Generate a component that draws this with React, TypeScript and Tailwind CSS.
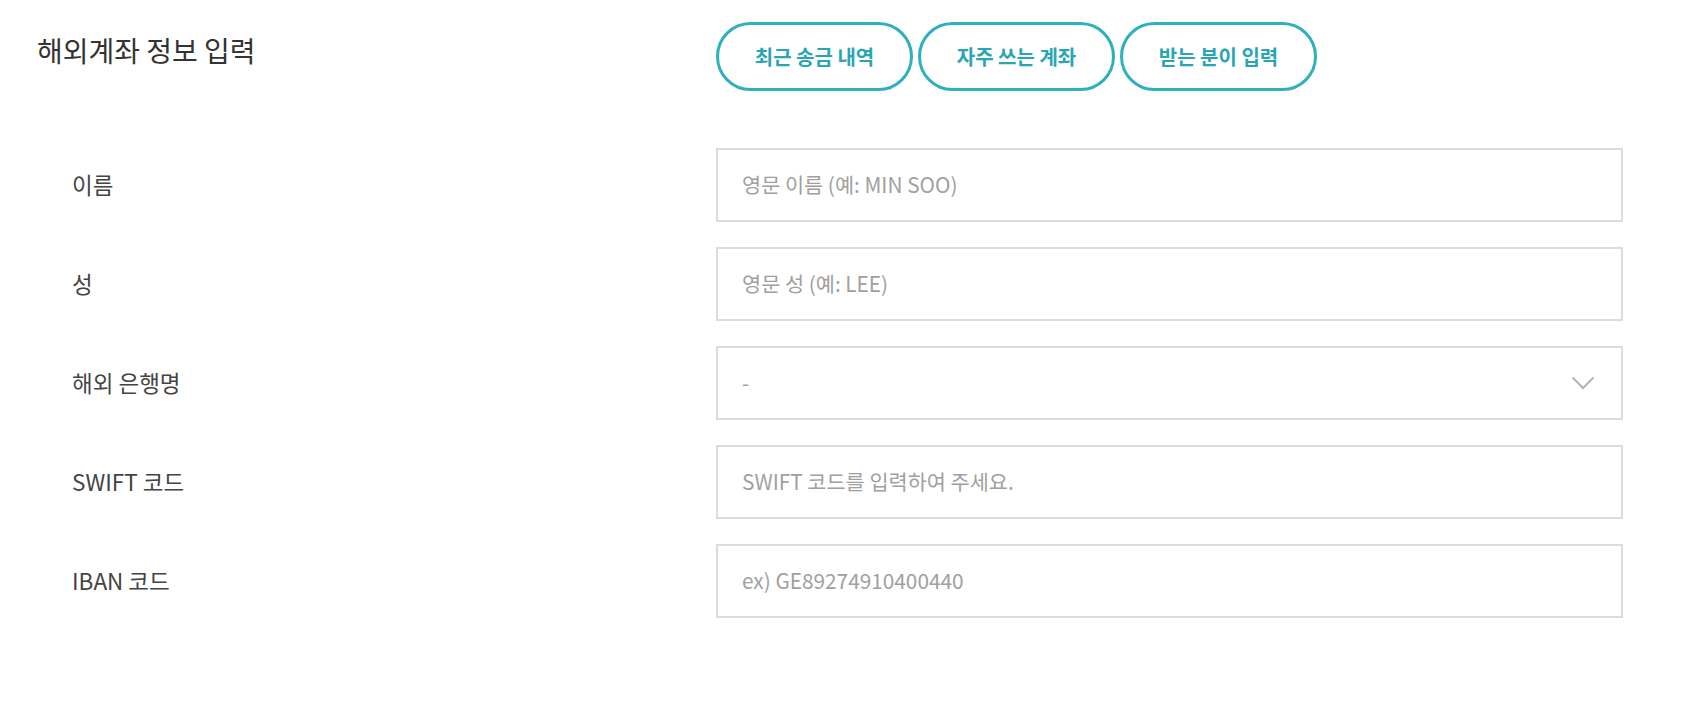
import React from "react";

const font = { fontFamily: '"Noto Sans CJK KR", "Noto Sans", sans-serif' };

function Chevron() {
  return (
    <svg width="24" height="14" viewBox="0 0 24 14" fill="none">
      <path d="M1.5 1.5 L12 12 L22.5 1.5" stroke="#b5b5b5" strokeWidth="2" />
    </svg>
  );
}

const rows: { label: string; placeholder: string; select?: boolean }[] = [
  { label: "이름", placeholder: "영문 이름 (예: MIN SOO)" },
  { label: "성", placeholder: "영문 성 (예: LEE)" },
  { label: "해외 은행명", placeholder: "-", select: true },
  { label: "SWIFT 코드", placeholder: "SWIFT 코드를 입력하여 주세요." },
  { label: "IBAN 코드", placeholder: "ex) GE89274910400440" },
];

export default function App() {
  return (
    <div className="w-[1693px] h-[702px] bg-white" style={font}>
      <div className="flex items-center pt-[22px]">
        <div className="w-[716px] pl-[37px] self-start pt-[8px]">
          <h1 className="text-[28px] leading-[40px] text-[#333] font-normal">해외계좌 정보 입력</h1>
        </div>
        <div className="flex gap-[5px]">
          {["최근 송금 내역", "자주 쓰는 계좌", "받는 분이 입력"].map((t) => (
            <button
              key={t}
              className="w-[197px] h-[69px] rounded-full border-[3px] border-[#2eb0bf] bg-white text-[#2aa5b4] font-bold text-[20px] flex items-center justify-center"
            >
              {t}
            </button>
          ))}
        </div>
      </div>
      <div className="mt-[57px] flex flex-col gap-[25px]">
        {rows.map((r) => (
          <div key={r.label} className="flex items-center h-[74px]">
            <div className="w-[716px] pl-[72px] text-[22.5px] text-[#444]">{r.label}</div>
            <div className="w-[907px] h-[74px] border-2 border-[#dcdcdc] flex items-center justify-between pl-[24px] pr-[26px]">
              <span className="text-[20.8px] text-[#a0a0a0]">{r.placeholder}</span>
              {r.select && <Chevron />}
            </div>
          </div>
        ))}
      </div>
    </div>
  );
}
